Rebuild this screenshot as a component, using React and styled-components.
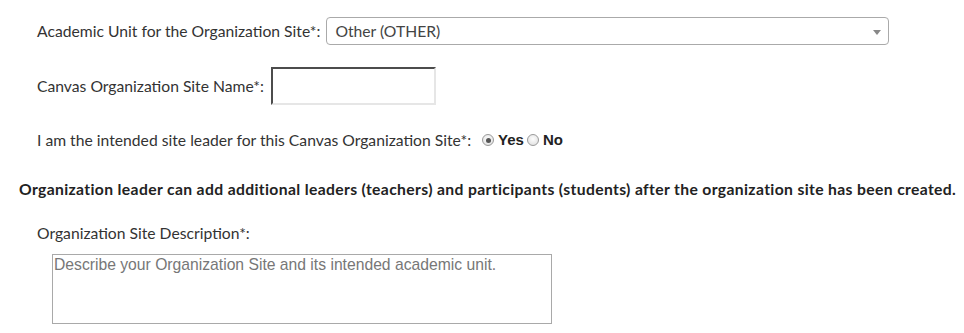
import React from "react";
import styled, { createGlobalStyle } from "styled-components";

const Global = createGlobalStyle`
  html, body { margin: 0; padding: 0; background: #fff; }
  body { font-family: Lato, "Open Sans", sans-serif; color: #333; }
`;

const Form = styled.form`
  display: flex;
  flex-direction: column;
  padding: 17px 0 0 19px;
  width: 964px;
  box-sizing: border-box;
`;

const Row = styled.div`
  display: flex;
  align-items: center;
  margin-left: 18px;
  margin-top: ${(p) => p.$top || 0}px;
  font-size: 15.7px;
  line-height: 20px;
  color: #333;
`;

const Label = styled.label`
  white-space: nowrap;
  margin-right: ${(p) => p.$gap ?? 5}px;
`;

const Select = styled.div`
  position: relative;
  box-sizing: border-box;
  width: 563px;
  height: 28px;
  border: 1px solid #aaa;
  border-radius: 4px;
  display: flex;
  align-items: center;
  padding-left: 8px;
  color: #444;
  font-size: 15.7px;
`;

const Arrow = styled.span`
  position: absolute;
  right: 7px;
  top: 12px;
  width: 0;
  height: 0;
  border-left: 4px solid transparent;
  border-right: 4px solid transparent;
  border-top: 5px solid #888;
`;

const TextInput = styled.input`
  box-sizing: border-box;
  width: 165px;
  height: 38px;
  border: 2px inset #e6e6e6;
  border-top-color: #a0a0a0;
  border-left-color: #a0a0a0;
  border-bottom-color: #e6e6e6;
  border-right-color: #e6e6e6;
  background: #fff;
  margin: 0;
  padding: 0 4px;
  font: inherit;
`;

const Radio = styled.span`
  display: inline-block;
  box-sizing: border-box;
  width: 12px;
  height: 12px;
  border-radius: 50%;
  border: 1px solid #9a9a9a;
  background: radial-gradient(circle at 50% 40%, #fdfdfd, #dcdcdc);
  margin: 0 4px 0 ${(p) => p.$ml || 0}px;
  position: relative;
  &::after {
    content: "";
    display: ${(p) => (p.$checked ? "block" : "none")};
    position: absolute;
    left: 2.5px;
    top: 2.5px;
    width: 5px;
    height: 5px;
    border-radius: 50%;
    background: #555;
  }
`;

const Choice = styled.span`
  font-family: "Liberation Sans", Arial, sans-serif;
  font-weight: bold;
  font-size: 15px;
  color: #222;
`;

const Notice = styled.p`
  margin: 29px 0 0 0;
  font-weight: bold;
  font-size: 15.7px;
  letter-spacing: 0.36px;
  line-height: 20px;
  color: #222;
  white-space: nowrap;
`;

const DescLabel = styled.label`
  margin: 24px 0 0 18px;
  font-size: 15.7px;
  line-height: 20px;
  color: #333;
`;

const TextArea = styled.textarea`
  box-sizing: border-box;
  width: 500px;
  height: 70px;
  margin: 11px 0 0 33px;
  border: 1px solid #a9a9a9;
  padding: 1px 1px;
  resize: none;
  font-family: "Liberation Sans", Arial, sans-serif;
  font-size: 15.7px;
  line-height: 18px;
  color: #333;
  &::placeholder { color: #777; }
`;

export default function App() {
  return (
    <>
      <Global />
      <Form>
        <Row>
          <Label $gap={6}>Academic Unit for the Organization Site*:</Label>
          <Select>
            Other (OTHER)
            <Arrow />
          </Select>
        </Row>
        <Row $top={22}>
          <Label $gap={7}>Canvas Organization Site Name*:</Label>
          <TextInput type="text" />
        </Row>
        <Row $top={25}>
          <Label $gap={11}>I am the intended site leader for this Canvas Organization Site*:</Label>
          <Radio $checked />
          <Choice>Yes</Choice>
          <Radio $ml={3} />
          <Choice>No</Choice>
        </Row>
        <Notice>
          Organization leader can add additional leaders (teachers) and participants (students) after the organization site has been created.
        </Notice>
        <DescLabel>Organization Site Description*:</DescLabel>
        <TextArea placeholder="Describe your Organization Site and its intended academic unit." />
      </Form>
    </>
  );
}
